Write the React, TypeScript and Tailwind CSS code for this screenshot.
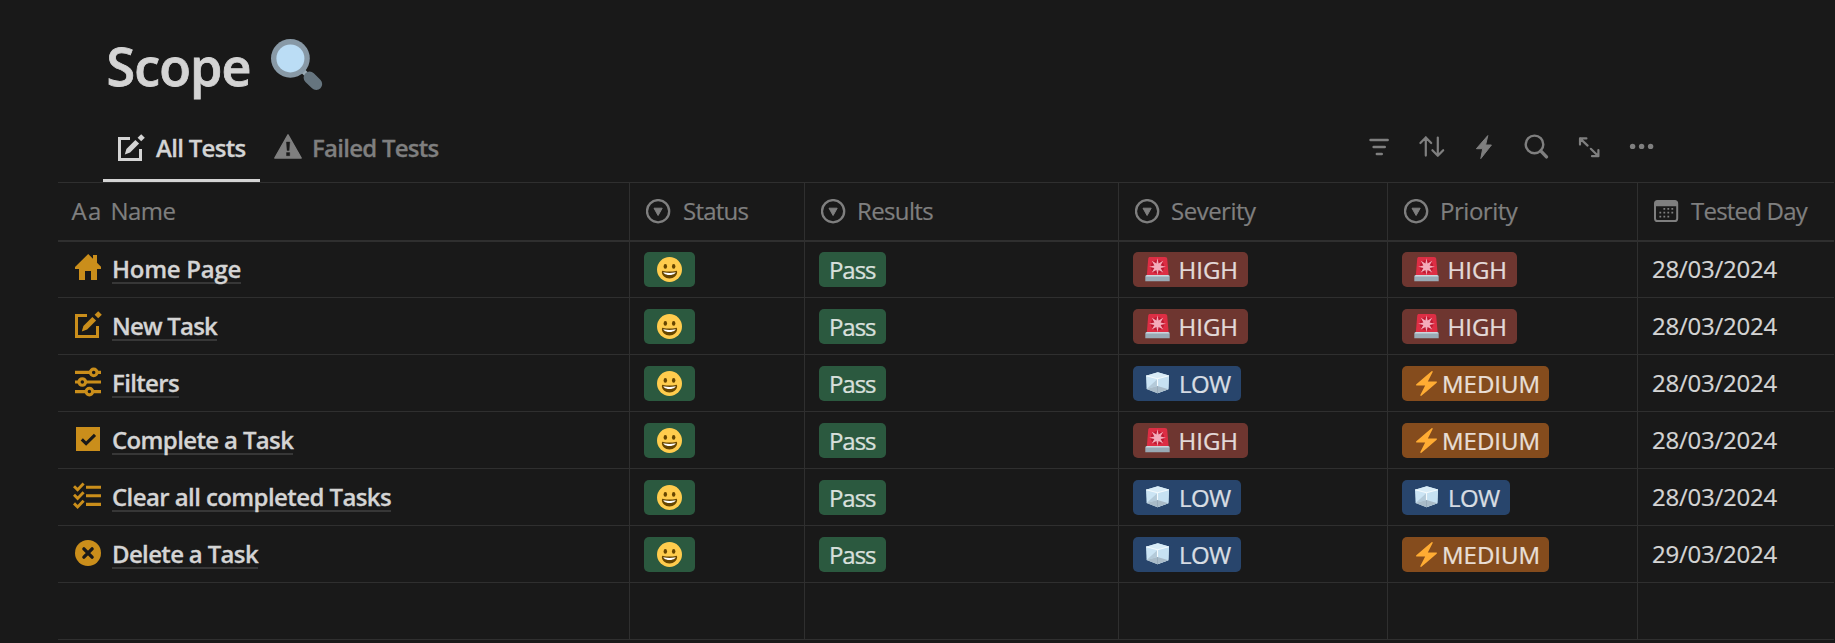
import React from "react";
import type { ReactNode } from "react";

/* ---------- Emoji drawings ---------- */

function MagnifierEmoji() {
  return (
    <svg className="h-[52px] w-[52px]" viewBox="0 0 52 52">
      <path d="M31 31l7 7" stroke="#9aaab4" strokeWidth="5" />
      <path d="M38.6 38.6l6.6 6.4" stroke="#66757f" strokeWidth="12" strokeLinecap="round" />
      <circle cx="19.4" cy="19.4" r="19.4" fill="#8899a6" />
      <circle cx="19.4" cy="19.4" r="14" fill="#bbddf5" />
    </svg>
  );
}

function SmileEmoji() {
  return (
    <svg className="mt-[5px] h-[25px] w-[25px] shrink-0" viewBox="0 0 36 36">
      <circle cx="18" cy="18" r="18" fill="#FFCC4D" />
      <path
        fill="#664500"
        d="M18 21c-3.623 0-6.027-.422-9-1-.679-.131-2 0-2 2 0 4 4.595 9 11 9 6.404 0 11-5 11-9 0-2-1.321-2.132-2-2-2.973.578-5.377 1-9 1z"
      />
      <path fill="#FFF" d="M9 22s3 1 9 1 9-1 9-1-2 4-9 4-9-4-9-4z" />
      <ellipse fill="#664500" cx="12" cy="13.5" rx="2.5" ry="3.5" />
      <ellipse fill="#664500" cx="24" cy="13.5" rx="2.5" ry="3.5" />
    </svg>
  );
}

function SirenEmoji() {
  return (
    <svg className="mt-[5px] h-[25px] w-[25px] shrink-0" viewBox="0 0 25 25">
      <path d="M5 0h15c1.4 0 2 .7 2.2 1.8l1.5 17.2H1.8L3.2 1.8C3.4.6 3.9 0 5 0z" fill="#DD2E44" />
      <circle cx="12.5" cy="9.7" r="6.8" fill="#BE1931" />
      <path
        fill="#F4ABBA"
        d="M12.5 1.2l1.1 5.2 4.6-2.6-2.6 4.7 5.3 1.2-5.3 1.2 2.6 4.7-4.6-2.7-1.1 5.3-1.1-5.3-4.6 2.7 2.6-4.7-5.3-1.2 5.3-1.2-2.6-4.7 4.6 2.6z"
      />
      <path d="M1.8 18h21.4c1 0 1.5.6 1.5 1.5v4.7H.3v-4.7c0-.9.6-1.5 1.5-1.5z" fill="#99AAB5" />
      <path d="M1.8 18h21.4l1 1.6H.8z" fill="#CCD6DD" />
    </svg>
  );
}

function IceEmoji() {
  return (
    <svg className="mt-[5px] h-[25px] w-[25px] shrink-0" viewBox="0 0 25 25">
      <path d="M12.8 1.2l11.2 3.3-.6 13.7-10.9 4L1.6 18 1 4.7z" fill="#CBE4F4" />
      <path d="M12.5 7.6L24 4.5l-.6 13.7-10.9 4z" fill="#C6E1F2" />
      <path d="M12.8 1.2L24 4.5 12.5 7.6 1 4.7z" fill="#D9ECF7" />
      <path d="M12.5 8v7L1.6 18z" fill="#B4CAD9" />
      <path d="M12.5 15l10.9 3.2-10.9 4L1.6 18z" fill="#A9BBC8" />
      <path d="M1.3 4.8l11.2 3 11.2-3M12.5 7.8V15" stroke="#F4FAFD" strokeWidth="1.1" fill="none" />
      <path d="M12.5 15v7" stroke="#8FA3B1" strokeWidth=".6" />
    </svg>
  );
}

function BoltEmoji() {
  return (
    <svg className="mt-[5px] h-[25px] w-[25px] shrink-0" viewBox="0 0 36 36">
      <path
        fill="#FFAC33"
        d="M32.938 15.651C32.792 15.26 32.418 15 32 15H19.925L26.89 1.458c.219-.426.106-.947-.271-1.243C26.437.071 26.218 0 26 0c-.233 0-.466.082-.653.243L18 6.588 3.347 19.243c-.316.273-.43.714-.284 1.105S3.582 21 4 21h12.075L9.11 34.542c-.219.426-.106.947.271 1.243.182.144.401.215.619.215.233 0 .466-.082.653-.243L18 29.412l14.653-12.655c.317-.273.43-.714.285-1.106z"
      />
    </svg>
  );
}

/* ---------- Page icons ---------- */

function EditShape() {
  return (
    <>
      <path d="M12 4.6H1.5v20.9h21V15" fill="none" stroke="currentColor" strokeWidth="3" />
      <path d="M6.8 20.4l1.6-5.5 9-9 3.7 3.7-9 8.9z" fill="currentColor" />
      <path d="M23.2.2l3.6 3.6-3.6 3.5-3.6-3.5z" fill="currentColor" />
    </>
  );
}

const pageIcons: Record<string, ReactNode> = {
  home: (
    <path
      transform="translate(2 1)"
      fill="currentColor"
      d="M13.2 0L18 4.7V1h4v7.7l4 4V15h-4v11h-6v-9h-6v9H4V15H0v-2z"
    />
  ),
  edit: (
    <g transform="translate(2 1)">
      <EditShape />
    </g>
  ),
  filters: (
    <g transform="translate(2 0)" fill="none" stroke="currentColor" strokeWidth="3.1">
      <path d="M0 5.4h15.4M22 5.4h4M0 15h4M10.6 15H26M0 24.6h11M17.8 24.6H26" />
      <circle cx="18.7" cy="5.4" r="3.3" />
      <circle cx="7.3" cy="15" r="3.3" />
      <circle cx="14.4" cy="24.6" r="3.3" />
    </g>
  ),
  done: (
    <g transform="translate(3 3)">
      <path d="M0 0h24v24H0z" fill="currentColor" />
      <path d="M5.8 12.4l4.3 4.2 8.9-8.8" fill="none" stroke="#191919" strokeWidth="3.1" />
    </g>
  ),
  checklist: (
    <g transform="translate(0 1)" fill="none" stroke="currentColor">
      <path d="M13 5.3h15M13 13.8h15M13 22.4h15" strokeWidth="3.1" />
      <path d="M1 4.2l3.6 3.6 6-6.2M1 12.8l3.6 3.6 6-6.2M1 21.4L4.6 25l6-6.2" strokeWidth="2.9" />
    </g>
  ),
  close: (
    <g transform="translate(2 2)">
      <circle cx="13" cy="13" r="13" fill="currentColor" />
      <path d="M8.9 8.9l8.2 8.2M17.1 8.9l-8.2 8.2" stroke="#191919" strokeWidth="3.4" strokeLinecap="round" />
    </g>
  ),
};

function PageIcon({ name }: { name: string }) {
  return (
    <svg className="h-[30px] w-[30px] shrink-0 text-[#ca8e1b]" viewBox="0 0 30 30">
      {pageIcons[name]}
    </svg>
  );
}

/* ---------- Column header icons ---------- */

function SelectIcon() {
  return (
    <svg className="mt-4 h-[25px] w-[25px] shrink-0" viewBox="0 0 25 25">
      <circle cx="12.1" cy="12.2" r="11.1" fill="none" stroke="currentColor" strokeWidth="2.3" />
      <path d="M8 9.2h8.2l-4.1 7.3z" fill="currentColor" stroke="currentColor" strokeLinejoin="round" />
    </svg>
  );
}

function CalendarIcon() {
  return (
    <svg className="mt-4 h-[25px] w-[25px] shrink-0" viewBox="0 0 25 25">
      <rect x="1" y="2" width="22.2" height="20" rx="2.6" fill="none" stroke="currentColor" strokeWidth="2" />
      <path d="M1 7.2V4c0-1.6.9-2.6 2.6-2.6h17c1.7 0 2.6 1 2.6 2.6v3.2z" fill="currentColor" />
      <path
        d="M9.4 9.8h1.8M13.4 9.8h1.8M17.4 9.8h1.8M5.4 13.7h1.8M9.4 13.7h1.8M13.4 13.7h1.8M17.4 13.7h1.8M5.4 17.6h1.8M9.4 17.6h1.8M13.4 17.6h1.8"
        stroke="currentColor"
        strokeWidth="1.8"
      />
    </svg>
  );
}

/* ---------- Toolbar ---------- */

const tools: { label: string; art: ReactNode }[] = [
  {
    label: "Filter",
    art: <path d="M5.5 7h17.2M8.6 14h11.2M11.8 21h5" strokeWidth="2.4" strokeLinecap="round" />,
  },
  {
    label: "Sort",
    art: (
      <path
        d="M7.8 22.6V4.4M2.4 10l5.4-5.6 5.4 5.6M19.8 4.6v18.2M14.4 17.2l5.4 5.6 5.4-5.6"
        strokeWidth="2.2"
        strokeLinecap="round"
        strokeLinejoin="round"
      />
    ),
  },
  {
    label: "Automations",
    art: (
      <path
        d="M17.8 2.6l-2.2 9.4h5.8L10.8 25.6l1.9-9.9H6.4z"
        fill="currentColor"
        strokeWidth="1"
        strokeLinejoin="round"
      />
    ),
  },
  {
    label: "Search",
    art: (
      <>
        <circle cx="11.5" cy="11.4" r="8.8" strokeWidth="2.4" />
        <path d="M17.7 17.9l5.8 6" strokeWidth="3.4" strokeLinecap="round" />
      </>
    ),
  },
  {
    label: "Expand",
    art: (
      <path
        d="M5 11.6V5.4h6.4M5 5.4l7.6 7.2M23.4 17v6.2H17M23.4 23.2l-7.6-7.4"
        strokeWidth="2.2"
        strokeLinecap="round"
        strokeLinejoin="round"
      />
    ),
  },
  {
    label: "More",
    art: (
      <g fill="currentColor" stroke="none">
        <circle cx="4.6" cy="13.4" r="2.7" />
        <circle cx="13.6" cy="13.4" r="2.7" />
        <circle cx="22.6" cy="13.4" r="2.7" />
      </g>
    ),
  },
];

/* ---------- Tags ---------- */

const tagBase = "flex h-[35px] rounded-[5px] leading-[35px] text-white/80 [-webkit-text-stroke:0.2px]";

function LevelTag({ level }: { level: string }) {
  if (level === "HIGH")
    return (
      <span className={`${tagBase} w-[115px] bg-[#6e3630] pl-3`}>
        <SirenEmoji />
        <span className="ml-[8.5px]">HIGH</span>
      </span>
    );
  if (level === "LOW")
    return (
      <span className={`${tagBase} w-[108px] bg-[#28456c] pl-3`}>
        <IceEmoji />
        <span className="ml-[9px] tracking-[-0.6px]">LOW</span>
      </span>
    );
  return (
    <span className={`${tagBase} w-[147px] bg-[#854c1d] pl-3`}>
      <BoltEmoji />
      <span className="ml-[3px]">MEDIUM</span>
    </span>
  );
}

/* ---------- Table ---------- */

const grid = "grid grid-cols-[572px_175px_314px_269px_250px_1fr]";
const cell = "flex items-start border-r border-[#2f2f2f] last:border-r-0";
const strong = "whitespace-nowrap font-semibold leading-8 [-webkit-text-stroke:0.3px]";

const columns = [
  { label: "Status", track: "tracking-[-0.76px] ml-3" },
  { label: "Results", track: "tracking-[-0.64px] ml-[11px]" },
  { label: "Severity", track: "tracking-[-0.5px] ml-[11px]" },
  { label: "Priority", track: "tracking-[-0.47px] ml-[11px]" },
];

const rows = [
  { icon: "home", name: "Home Page", track: "tracking-[-0.27px]", severity: "HIGH", priority: "HIGH", day: "28/03/2024" },
  { icon: "edit", name: "New Task", track: "tracking-[-0.79px]", severity: "HIGH", priority: "HIGH", day: "28/03/2024" },
  { icon: "filters", name: "Filters", track: "tracking-[-0.65px]", severity: "LOW", priority: "MEDIUM", day: "28/03/2024" },
  { icon: "done", name: "Complete a Task", track: "tracking-[-0.64px]", severity: "HIGH", priority: "MEDIUM", day: "28/03/2024" },
  { icon: "checklist", name: "Clear all completed Tasks", track: "tracking-[-0.59px]", severity: "LOW", priority: "LOW", day: "28/03/2024" },
  { icon: "close", name: "Delete a Task", track: "tracking-[-0.66px]", severity: "LOW", priority: "MEDIUM", day: "29/03/2024" },
];

export default function App() {
  return (
    <div className="h-[643px] w-[1835px] overflow-hidden bg-[#191919] font-['Open_Sans',sans-serif] text-[24px] text-[#d4d4d4]">
      <header className="flex h-[122px] items-start pl-[106.5px] pt-9">
        <h1 className="w-[164.5px] text-[52px] font-semibold leading-[60px] tracking-[-0.88px] [-webkit-text-stroke:0.8px]">
          Scope
        </h1>
        <div className="mt-[3px]">
          <MagnifierEmoji />
        </div>
      </header>

      <nav className="flex h-[60px] items-stretch pl-[103px] pr-[167px]">
        <div className="flex w-[157px] items-start border-b-[3px] border-[#d4d4d4] pl-[15px] pt-[10px]">
          <svg className="mt-[2px] h-[27px] w-[27px] shrink-0" viewBox="0 0 27 27">
            <EditShape />
          </svg>
          <span className={`${strong} ml-[11px] tracking-[-0.69px]`}>All Tests</span>
        </div>
        <div className="flex items-start pl-[14px] pt-[10px] text-[#7f7f7f]">
          <svg className="mt-[2px] h-[25px] w-[28px] shrink-0" viewBox="0 0 28 25">
            <path
              d="M14 .8L27.2 24H.8z"
              fill="currentColor"
              stroke="currentColor"
              strokeWidth="1.4"
              strokeLinejoin="round"
            />
            <path d="M12.4 8h3.4l-.7 8.6h-2zM12.5 18.6h3.2v3.1h-3.2z" fill="#191919" stroke="#191919" strokeWidth=".4" />
          </svg>
          <span className={`${strong} ml-[10px] tracking-[-0.74px]`}>Failed Tests</span>
        </div>
        <div className="ml-auto flex items-start pt-[11px] text-[#7f7f7f]">
          {tools.map((tool) => (
            <button key={tool.label} aria-label={tool.label} className="flex w-[52.5px] justify-center">
              <svg className="h-7 w-7" viewBox="0 0 28 28" fill="none" stroke="currentColor">
                {tool.art}
              </svg>
            </button>
          ))}
        </div>
      </nav>

      <main className="ml-[58px] w-[1776px] border-t border-[#2f2f2f]">
        <div
          className={`${grid} h-[59px] border-b-2 border-[#2f2f2f] leading-[55px] text-[#7f7f7f] [-webkit-text-stroke:0.2px]`}
        >
          <div className={`${cell} pl-[13.5px]`}>
            <span className="w-[39px] tracking-[1.3px]">Aa</span>
            <span className="tracking-[-0.54px]">Name</span>
          </div>
          {columns.map((c) => (
            <div key={c.label} className={`${cell} pl-4`}>
              <SelectIcon />
              <span className={c.track}>{c.label}</span>
            </div>
          ))}
          <div className={`${cell} pl-4`}>
            <CalendarIcon />
            <span className="ml-3 whitespace-nowrap tracking-[-0.78px]">Tested Day</span>
          </div>
        </div>

        <div className="-mt-px">
          {rows.map((r) => (
            <div key={r.name} className={`${grid} h-[57px] border-b border-[#2f2f2f]`}>
              <div className={`${cell} pl-[15px] pt-3`}>
                <PageIcon name={r.icon} />
                <span className={`${strong} ml-[9px] h-[31px] border-b-2 border-[#373737] ${r.track}`}>{r.name}</span>
              </div>
              <div className={`${cell} pl-[14px] pt-[11px]`}>
                <span className={`${tagBase} w-[51px] bg-[#2b593f] pl-[13px]`}>
                  <SmileEmoji />
                </span>
              </div>
              <div className={`${cell} pl-[14px] pt-[11px]`}>
                <span className={`${tagBase} w-[67px] bg-[#2b593f] pl-[10px] tracking-[-1.07px]`}>Pass</span>
              </div>
              <div className={`${cell} pl-[14px] pt-[11px]`}>
                <LevelTag level={r.severity} />
              </div>
              <div className={`${cell} pl-[14px] pt-[11px]`}>
                <LevelTag level={r.priority} />
              </div>
              <div className={`${cell} pl-[14px] pt-3 leading-8 tracking-[-0.25px] [-webkit-text-stroke:0.2px]`}>
                {r.day}
              </div>
            </div>
          ))}
          <div className={`${grid} h-[57px] border-b border-[#2f2f2f]`}>
            <div className={cell} />
            <div className={cell} />
            <div className={cell} />
            <div className={cell} />
            <div className={cell} />
            <div className={cell} />
          </div>
        </div>
      </main>
    </div>
  );
}
